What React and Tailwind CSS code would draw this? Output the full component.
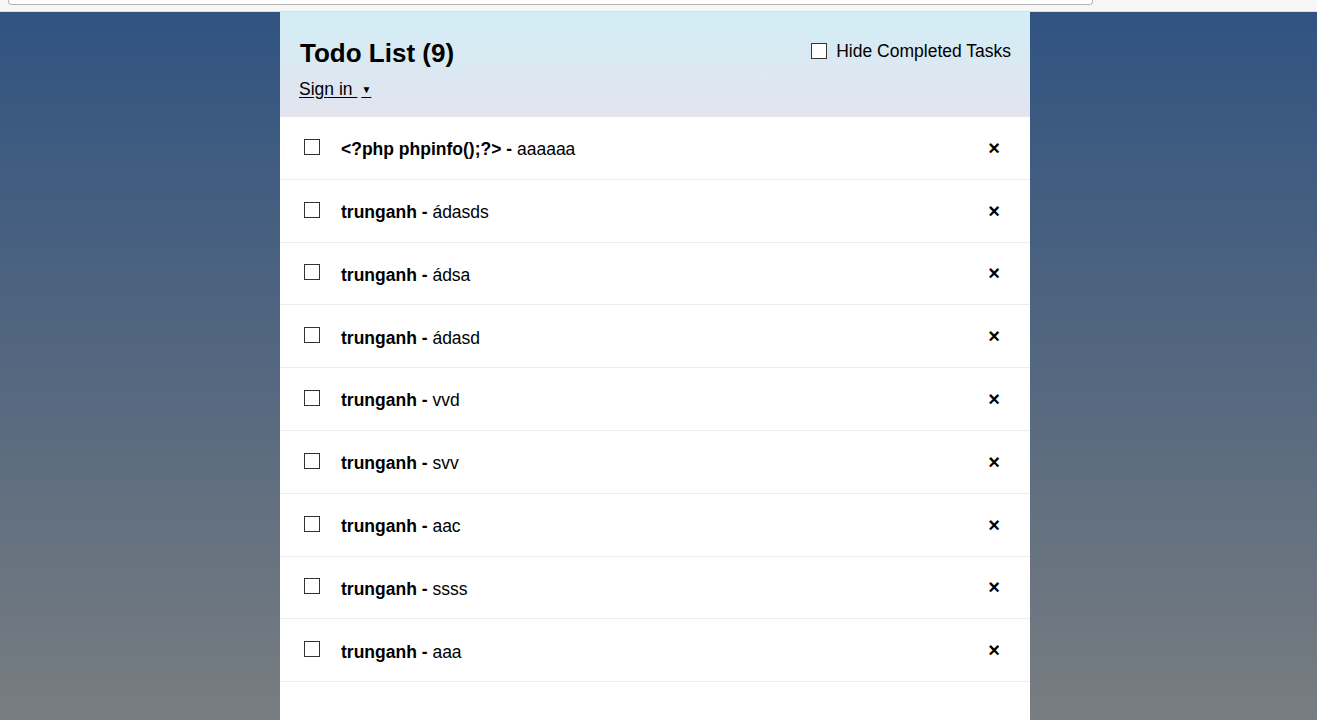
import React from 'react';

const tasks = [
  { user: '<?php phpinfo();?>', text: 'aaaaaa' },
  { user: 'trunganh', text: 'ádasds' },
  { user: 'trunganh', text: 'ádsa' },
  { user: 'trunganh', text: 'ádasd' },
  { user: 'trunganh', text: 'vvd' },
  { user: 'trunganh', text: 'svv' },
  { user: 'trunganh', text: 'aac' },
  { user: 'trunganh', text: 'ssss' },
  { user: 'trunganh', text: 'aaa' },
];

const Box = () => (
  <span className="block w-4 h-4 border border-[#333] bg-white shrink-0" />
);

const App = () => {
  return (
    <div className="min-h-screen flex flex-col font-['Liberation_Sans',Arial,sans-serif] text-black">
      {/* browser strip */}
      <div className="h-3 bg-[#f7f7f7] border-b border-[#dcdcdc] flex items-start">
        <div className="ml-2 w-[1085px] h-[5px] bg-white border-b border-x border-[#b5b5b5] rounded-b-sm" />
      </div>

      <div className="flex-1 flex bg-gradient-to-b from-[#305381] via-[#54677f] to-[#787d80]">
        <div className="ml-[280px] w-[750px] bg-white flex flex-col">
          {/* Header */}
          <header className="h-[105px] bg-gradient-to-b from-[#d2edf5] to-[#e2e4ef] px-5 pt-[26px] flex justify-between">
            <div>
              <h1 className="text-[26px] font-bold leading-[30px]">Todo List (9)</h1>
              <div className="mt-[10px] text-[17.5px] leading-[22px] underline underline-offset-2 -ml-px">
                Sign in <span className="text-[10px] align-middle ml-1">▼</span>
              </div>
            </div>
            <label className="flex items-center gap-[9px] h-[26px] text-[17.5px] mr-[-1px]">
              <Box />
              Hide Completed Tasks
            </label>
          </header>

          {/* Task list */}
          <ul>
            {tasks.map((t, i) => (
              <li
                key={i}
                className="h-[62.8px] border-b border-[#ededed] flex items-center pl-6 pr-[30px] text-[17.5px]"
              >
                <span className="-mt-[2px]"><Box /></span>
                <span className="ml-[21px] flex-1 pt-[3px]">
                  <strong className="font-bold">{t.user} -</strong> {t.text}
                </span>
                <span className="font-bold text-[20px] leading-none">×</span>
              </li>
            ))}
          </ul>
        </div>
      </div>
    </div>
  );
};

export default App;
